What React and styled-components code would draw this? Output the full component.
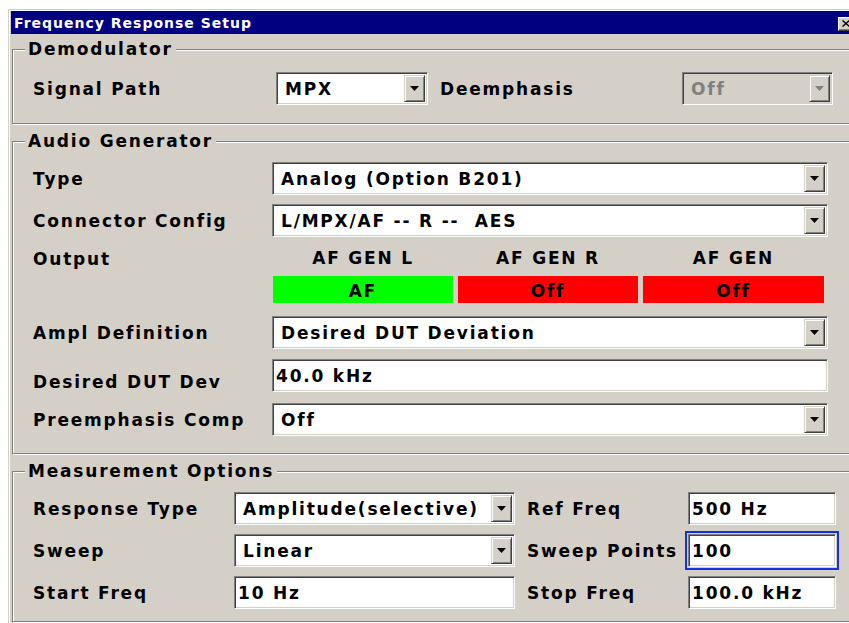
import React from "react";
import styled, { createGlobalStyle } from "styled-components";

const face = `"DejaVu Sans", Verdana, "Liberation Sans", sans-serif`;
const face3d = "#d4d0c8";

const Global = createGlobalStyle`
  html, body { margin: 0; padding: 0; background: #fff; overflow: hidden; }
  body { font-family: ${face}; }
`;

const Window = styled.div`
  box-sizing: border-box;
  width: 851px;
  height: 640px;
  margin: 9px 0 0 8px;
  padding: 1px 2px 0 2px;
  background: ${face3d};
  border: 1px solid ${face3d};
  box-shadow: inset 1px 1px 0 #fff;
`;

const TitleBar = styled.div`
  height: 23px;
  background: #000080;
  display: flex;
  align-items: center;
  justify-content: space-between;
`;

const TitleText = styled.span`
  padding-left: 3px;
  color: #fff;
  font: bold 14px ${face};
  letter-spacing: 1px;
  line-height: 23px;
  padding-top: 2px;
`;

const CloseButton = styled.span`
  box-sizing: border-box;
  width: 16px;
  height: 14px;
  margin-right: 2px;
  margin-top: 2px;
  background: ${face3d};
  border: 1px solid;
  border-color: #fff #404040 #404040 #fff;
  box-shadow: inset -1px -1px 0 #808080;
  display: flex;
  align-items: center;
  justify-content: center;
`;

const Body = styled.div`
  padding: 15px 0 0 1px;
`;

const Group = styled.section`
  border: 1px solid #808080;
  box-shadow: inset 1px 1px 0 #fff, 1px 1px 0 #fff;
  & + & {
    margin-top: 17px;
  }
`;

const Legend = styled.h2`
  margin: -11px 0 0 12px;
  padding: 0 3px;
  width: fit-content;
  height: 20px;
  line-height: 20px;
  background: ${face3d};
  font: bold 17px ${face};
  letter-spacing: 1.8px;
  color: #000;
`;

const Rows = styled.div`
  display: flex;
  flex-direction: column;
  gap: 9px;
  padding: ${(p) => p.$top}px 0 ${(p) => p.$bottom}px 20px;
`;

const Row = styled.div`
  display: grid;
  grid-template-columns: ${(p) => p.$cols};
  align-items: center;
  height: 33px;
  margin-top: ${(p) => p.$mt || 0}px;
`;

const Label = styled.span`
  padding-left: ${(p) => p.$pad || 0}px;
  padding-top: ${(p) => 1 + (p.$drop || 0)}px;
  font: bold 17px ${face};
  letter-spacing: 1.8px;
  color: #000;
  white-space: nowrap;
`;

const Field = styled.div`
  box-sizing: border-box;
  height: 33px;
  padding: 2px;
  display: flex;
  align-items: stretch;
  background: ${(p) => (p.$disabled ? face3d : "#fff")};
  border: 1px solid;
  border-color: #808080 #fff #fff #808080;
  box-shadow: inset 1px 1px 0 #404040, inset -1px -1px 0 ${face3d};
  outline: ${(p) => (p.$focused ? "2px solid #1530e0" : "none")};
  outline-offset: 1px;
`;

const FieldText = styled.span`
  flex: 1;
  display: flex;
  align-items: center;
  padding-left: ${(p) => p.$inset}px;
  padding-top: 1px;
  font: bold 17px ${face};
  letter-spacing: 1.8px;
  color: ${(p) => (p.$disabled ? "#808080" : "#000")};
  white-space: pre;
  overflow: hidden;
`;

const DropButton = styled.span`
  box-sizing: border-box;
  width: 21px;
  flex: none;
  background: ${face3d};
  border: 1px solid;
  border-color: ${face3d} #404040 #404040 ${face3d};
  box-shadow: inset 1px 1px 0 #fff, inset -1px -1px 0 #808080;
  display: flex;
  align-items: center;
  justify-content: center;
`;

const OutputRow = styled.div`
  display: grid;
  grid-template-columns: 239px 556px;
  margin-top: 2px;
`;

const OutputLabel = styled(Label)`
  line-height: 20px;
  align-self: start;
`;

const Channels = styled.div`
  display: grid;
  grid-template-columns: 180px 180px 181px;
  column-gap: 5px;
  padding-left: 1px;
`;

const Channel = styled.div`
  display: flex;
  flex-direction: column;
  align-items: stretch;
`;

const ChannelName = styled.span`
  height: 20px;
  line-height: 20px;
  text-align: center;
  font: bold 17px ${face};
  letter-spacing: 1.8px;
  color: #000;
  white-space: pre;
`;

const ChannelState = styled.span`
  box-sizing: border-box;
  margin-top: 8px;
  height: 27px;
  padding-top: 3px;
  display: flex;
  align-items: center;
  justify-content: center;
  background: ${(p) => (p.$on ? "#00ff00" : "#ff0000")};
  font: bold 17px ${face};
  letter-spacing: 1.8px;
  color: #000;
`;

function Arrow({ disabled }) {
  return (
    <svg width="9" height="5" viewBox="0 0 9 5">
      <polygon points="0,0 9,0 4.5,5" fill={disabled ? "#808080" : "#000"} />
    </svg>
  );
}

function Combo({ value, disabled }) {
  return (
    <Field $disabled={disabled}>
      <FieldText $inset={6} $disabled={disabled}>
        {value}
      </FieldText>
      <DropButton>
        <Arrow disabled={disabled} />
      </DropButton>
    </Field>
  );
}

function Edit({ value, focused }) {
  return (
    <Field $focused={focused}>
      <FieldText $inset={1}>{value}</FieldText>
    </Field>
  );
}

const demodCols = "243px 152px 254px 151px";
const audioCols = "239px 556px";
const measCols = "201px 281px 173px 148px";

const channels = [
  { name: "AF GEN L", state: "AF", on: true },
  { name: "AF GEN R", state: "Off", on: false },
  { name: "AF GEN", state: "Off", on: false },
];

export default function App() {
  return (
    <>
      <Global />
      <Window>
        <TitleBar>
          <TitleText>Frequency Response Setup</TitleText>
          <CloseButton>
            <svg width="8" height="7" viewBox="0 0 8 7">
              <path d="M0.5 0.5 L7.5 6.5 M7.5 0.5 L0.5 6.5" stroke="#000" strokeWidth="1.4" />
            </svg>
          </CloseButton>
        </TitleBar>
        <Body>
          <Group>
            <Legend>Demodulator</Legend>
            <Rows $top={13} $bottom={18}>
              <Row $cols={demodCols}>
                <Label>Signal Path</Label>
                <Combo value="MPX" />
                <Label $pad={12}>Deemphasis</Label>
                <Combo value="Off" disabled />
              </Row>
            </Rows>
          </Group>

          <Group>
            <Legend>Audio Generator</Legend>
            <Rows $top={11} $bottom={17}>
              <Row $cols={audioCols}>
                <Label>Type</Label>
                <Combo value="Analog (Option B201)" />
              </Row>
              <Row $cols={audioCols}>
                <Label>Connector Config</Label>
                <Combo value="L/MPX/AF -- R --  AES" />
              </Row>
              <OutputRow>
                <OutputLabel>Output</OutputLabel>
                <Channels>
                  {channels.map((c) => (
                    <Channel key={c.name}>
                      <ChannelName>{c.name}</ChannelName>
                      <ChannelState $on={c.on}>{c.state}</ChannelState>
                    </Channel>
                  ))}
                </Channels>
              </OutputRow>
              <Row $cols={audioCols} $mt={4}>
                <Label>Ampl Definition</Label>
                <Combo value="Desired DUT Deviation" />
              </Row>
              <Row $cols={audioCols} $mt={1}>
                <Label $drop={12}>Desired DUT Dev</Label>
                <Edit value="40.0 kHz" />
              </Row>
              <Row $cols={audioCols} $mt={2}>
                <Label>Preemphasis Comp</Label>
                <Combo value="Off" />
              </Row>
            </Rows>
          </Group>

          <Group>
            <Legend>Measurement Options</Legend>
            <Rows $top={11} $bottom={12}>
              <Row $cols={measCols}>
                <Label>Response Type</Label>
                <Combo value="Amplitude(selective)" />
                <Label $pad={12}>Ref Freq</Label>
                <Edit value="500 Hz" />
              </Row>
              <Row $cols={measCols}>
                <Label>Sweep</Label>
                <Combo value="Linear" />
                <Label $pad={12}>Sweep Points</Label>
                <Edit value="100" focused />
              </Row>
              <Row $cols={measCols}>
                <Label>Start Freq</Label>
                <Edit value="10 Hz" />
                <Label $pad={12}>Stop Freq</Label>
                <Edit value="100.0 kHz" />
              </Row>
            </Rows>
          </Group>
        </Body>
      </Window>
    </>
  );
}
